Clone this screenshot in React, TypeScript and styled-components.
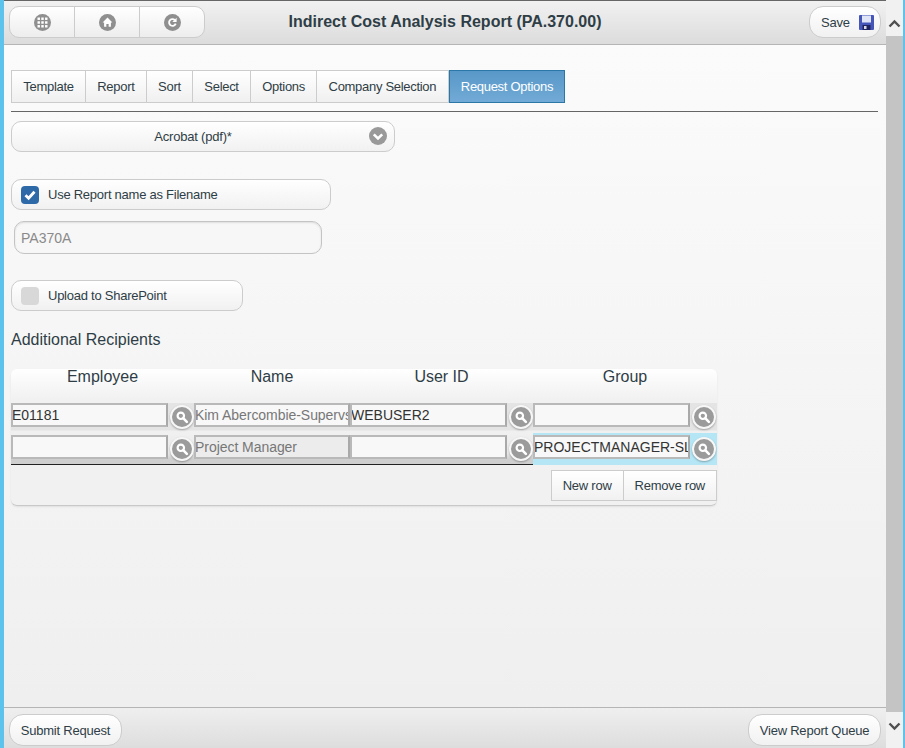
import React from 'react';
import styled, { createGlobalStyle } from 'styled-components';

const GlobalStyle = createGlobalStyle`
  html, body {
    margin: 0;
    padding: 0;
    overflow: hidden;
  }
  body {
    font-family: "Liberation Sans", Arial, sans-serif;
    color: #333;
  }
`;

const Frame = styled.div`
  display: flex;
  width: 905px;
  height: 748px;
  background: #5cc3ec;
  padding: 0 2px 0 4px;
  box-sizing: border-box;
`;

const Page = styled.div`
  width: 882px;
  height: 748px;
  display: flex;
  flex-direction: column;
  border-top: 1px solid #666;
  box-sizing: border-box;
`;

const Header = styled.header`
  height: 44px;
  flex: none;
  box-sizing: border-box;
  border-bottom: 1px solid #b5b5b5;
  background: linear-gradient(#f1f1f1, #dcdcdc);
  display: flex;
  align-items: flex-start;
  justify-content: space-between;
  padding: 5px 5px 0 5px;
  position: relative;
`;

const Title = styled.h1`
  position: absolute;
  left: 0;
  right: 0;
  top: 11px;
  margin: 0;
  text-align: center;
  font-size: 16px;
  line-height: 20px;
  font-weight: bold;
  color: #2f3e46;
`;

const NavGroup = styled.div`
  display: flex;
  width: 196px;
  height: 32px;
  box-sizing: border-box;
  border: 1px solid #ccc;
  border-radius: 10px;
  background: linear-gradient(#fff, #ededed);
  overflow: hidden;
`;

const NavButton = styled.div`
  flex: 1;
  display: flex;
  align-items: center;
  justify-content: center;
  & + & {
    border-left: 1px solid #ccc;
  }
`;

const PillButton = styled.div<{ $wide?: number }>`
  height: 32px;
  box-sizing: border-box;
  width: ${(p) => p.$wide ?? 72}px;
  border: 1px solid #ccc;
  border-radius: 14px;
  background: linear-gradient(#fff, #f1f1f1);
  display: flex;
  align-items: center;
  justify-content: center;
  gap: 9px;
  font-size: 13px;
  letter-spacing: -0.22px;
  color: #2f3e46;
`;

const SaveButton = styled(PillButton)`
  padding-left: 5px;
`;

const Content = styled.main`
  flex: 1;
  background: linear-gradient(#fbfbfb, #efefef);
  padding: 25px 8px 0 7px;
  box-sizing: border-box;
`;

const Tabs = styled.div`
  display: flex;
  height: 33px;
  padding-bottom: 8px;
  border-bottom: 1px solid #666;
  box-sizing: content-box;
`;

const Tab = styled.div<{ $active?: boolean }>`
  height: 33px;
  box-sizing: border-box;
  padding: 0 11.3px;
  display: flex;
  align-items: center;
  font-size: 13px;
  letter-spacing: -0.3px;
  border: 1px solid ${(p) => (p.$active ? '#2a77a8' : '#ccc')};
  border-left-width: ${(p) => (p.$active ? 1 : 0)}px;
  background: ${(p) => (p.$active ? 'linear-gradient(#5898c8, #72aad6)' : 'linear-gradient(#fff, #f0f0f0)')};
  color: ${(p) => (p.$active ? '#fff' : '#2f3e46')};
  &:first-child {
    border-left-width: 1px;
  }
`;

const SelectBox = styled.div`
  position: relative;
  margin-top: 9px;
  width: 384px;
  height: 31px;
  box-sizing: border-box;
  border: 1px solid #ccc;
  border-radius: 10px;
  background: linear-gradient(#fff, #f1f1f1);
  display: flex;
  align-items: center;
  justify-content: center;
  font-size: 13px;
  letter-spacing: -0.2px;
  color: #2f3e46;
  padding-right: 20px;
  & > svg {
    position: absolute;
    right: 7px;
    top: 5px;
  }
`;

const CheckRow = styled.div<{ $width: number; $top: number }>`
  margin-top: ${(p) => p.$top}px;
  width: ${(p) => p.$width}px;
  height: 31px;
  box-sizing: border-box;
  border: 1px solid #ccc;
  border-radius: 10px;
  background: linear-gradient(#fff, #f1f1f1);
  display: flex;
  align-items: center;
  gap: 9px;
  padding-left: 9px;
  font-size: 13px;
  letter-spacing: -0.25px;
  color: #2f3e46;
`;

const CheckMark = styled.span<{ $on?: boolean }>`
  width: 18px;
  height: 18px;
  border-radius: 4px;
  display: flex;
  align-items: center;
  justify-content: center;
  background: ${(p) => (p.$on ? '#2f6aa8' : '#d8d8d8')};
`;

const FileInput = styled.input`
  display: block;
  margin: 11px 0 0 3px;
  width: 308px;
  height: 33px;
  box-sizing: border-box;
  border: 1px solid #c4c4c4;
  border-radius: 10px;
  background: #f7f7f7;
  box-shadow: inset 0 1px 2px rgba(0, 0, 0, 0.1);
  padding: 0 0 0 6px;
  font-family: inherit;
  font-size: 14px;
  color: #8a8a8a;
  outline: none;
`;

const SectionTitle = styled.h2`
  margin: 19px 0 0;
  font-size: 16px;
  line-height: 20px;
  font-weight: normal;
  color: #2f3e46;
`;

const Card = styled.section`
  margin-top: 19px;
  width: 706px;
  height: 137px;
  box-sizing: border-box;
  border-radius: 6px;
  background: linear-gradient(#fff 0, #f1f1f1 30px, #f1f1f1 100%);
  border-bottom: 1px solid #c8c8c8;
  box-shadow: 0 1px 2px rgba(0, 0, 0, 0.08);
`;

const Grid = styled.div`
  display: grid;
  grid-template-columns: 183px 156px 183px 184px;
`;

const HeadCell = styled.div`
  height: 34px;
  text-align: center;
  font-size: 16px;
  line-height: 15px;
  color: #2f3e46;
`;

const Cell = styled.div<{ $band: 'first' | 'second'; $focus?: boolean }>`
  height: ${(p) => (p.$band === 'first' ? 32 : 30)}px;
  box-sizing: border-box;
  display: flex;
  align-items: flex-start;
  background: ${(p) =>
    p.$focus
      ? '#b4e6f6'
      : p.$band === 'first'
        ? 'linear-gradient(#e4e4e4 0, #e4e4e4 27px, #f0f0f0 28px)'
        : 'linear-gradient(#efefef 0, #e9e9e9 18px, #cfcfcf 24px)'};
  box-shadow: ${(p) => (p.$focus ? '0 -2px 0 #b4e6f6' : 'none')};
  border-bottom: ${(p) => (p.$band === 'second' && !p.$focus ? '1px solid #222' : 'none')};
`;

const TextField = styled.input<{ $width: number; $muted?: boolean; $shaded?: boolean }>`
  width: ${(p) => p.$width}px;
  height: 24px;
  box-sizing: border-box;
  border: 2px solid #b9b9b9;
  border-right-color: #a9a9a9;
  border-radius: 0;
  outline: none;
  background: ${(p) => (p.$shaded ? '#ececec' : '#f8f8f8')};
  font-family: inherit;
  font-size: 14px;
  letter-spacing: ${(p) => (p.$muted ? '-0.05px' : '0')};
  padding: 0;
  text-indent: -1px;
  color: ${(p) => (p.$muted ? '#777' : '#333')};
`;

const LookupButton = styled.span`
  width: 24px;
  height: 24px;
  margin: 2px 0 0 2px;
  flex: none;
  border-radius: 50%;
  background: #9b9b9b;
  border: 2px solid #f7f7f7;
  box-shadow: 0 1px 2px rgba(0, 0, 0, 0.3);
  box-sizing: border-box;
  display: flex;
  align-items: center;
  justify-content: center;
`;

const RowActions = styled.div`
  display: flex;
  justify-content: flex-end;
  margin-top: 5px;
`;

const ActionButton = styled.div`
  height: 31px;
  box-sizing: border-box;
  border: 1px solid #ccc;
  border-left-width: 0;
  padding: 0 11px;
  display: flex;
  align-items: center;
  font-size: 13px;
  letter-spacing: -0.25px;
  color: #2f3e46;
  background: linear-gradient(#fff, #f1f1f1);
  &:first-child {
    border-left-width: 1px;
  }
`;

const Footer = styled.footer`
  height: 41px;
  flex: none;
  box-sizing: border-box;
  border-top: 1px solid #b5b5b5;
  background: linear-gradient(#efefef, #dddddd);
  padding: 6px 5px 0;
  display: flex;
  justify-content: space-between;
`;

const Scrollbar = styled.div`
  width: 17px;
  height: 748px;
  flex: none;
  background: #f1f1f1;
  display: flex;
  flex-direction: column;
  align-items: center;
`;

const ScrollArrow = styled.div<{ $bottom?: boolean }>`
  height: 36px;
  flex: none;
  display: flex;
  align-items: center;
  justify-content: center;
  padding: ${(p) => (p.$bottom ? '0 0 8px' : '11px 0 0')};
  box-sizing: border-box;
`;

const ScrollThumb = styled.div`
  flex: 1;
  width: 100%;
  background: #c4c4c4;
`;

const GridIcon = () => (
  <svg width="17" height="17" viewBox="0 0 18 18">
    <circle cx="9" cy="9" r="9" fill="#8f8f8f" />
    {[5, 9, 13].flatMap((y) =>
      [5, 9, 13].map((x) => <rect key={`${x}-${y}`} x={x - 1.3} y={y - 1.3} width="2.6" height="2.6" fill="#fff" />)
    )}
  </svg>
);

const HomeIcon = () => (
  <svg width="17" height="17" viewBox="0 0 18 18">
    <circle cx="9" cy="9" r="9" fill="#8f8f8f" />
    <path d="M9 3.8 L14.2 9 H12.6 V13.5 H10.2 V10.5 H7.8 V13.5 H5.4 V9 H3.8 Z" fill="#fff" />
  </svg>
);

const RefreshIcon = () => (
  <svg width="17" height="17" viewBox="0 0 18 18">
    <circle cx="9" cy="9" r="9" fill="#8f8f8f" />
    <path d="M12.4 10.2 A3.6 3.6 0 1 1 11.4 6.3" fill="none" stroke="#fff" strokeWidth="2" />
    <path d="M13.4 4 V8.6 H8.8 Z" fill="#fff" />
  </svg>
);

const SaveIcon = () => (
  <svg width="15" height="15" viewBox="0 0 15 15">
    <rect width="15" height="15" rx="1" fill="#4656b8" />
    <rect x="3" y="0.5" width="9" height="7" fill="#dfe4f6" />
    <rect x="3.5" y="10" width="8" height="5" fill="#20245e" />
    <rect x="5" y="11" width="2.5" height="3" fill="#d7d7e6" />
  </svg>
);

const ChevronDownCircle = () => (
  <svg width="18" height="18" viewBox="0 0 18 18">
    <circle cx="9" cy="9" r="9" fill="#999" />
    <path d="M4.8 7.3 L9 11.5 L13.2 7.3" fill="none" stroke="#fff" strokeWidth="2.6" />
  </svg>
);

const CheckIcon = () => (
  <svg width="14" height="14" viewBox="0 0 14 14">
    <path d="M2.5 7.2 L5.6 10.3 L11.5 3.8" fill="none" stroke="#fff" strokeWidth="2.8" />
  </svg>
);

const SearchIcon = () => (
  <svg width="14" height="14" viewBox="0 0 13 13">
    <circle cx="5.4" cy="5.4" r="3" fill="none" stroke="#fff" strokeWidth="2" />
    <path d="M7.8 7.8 L11 11" stroke="#fff" strokeWidth="2.4" strokeLinecap="round" />
  </svg>
);

const ScrollChevron = ({ up }: { up?: boolean }) => (
  <svg width="13" height="9" viewBox="0 0 13 9">
    <path d={up ? 'M1.5 7.5 L6.5 2.5 L11.5 7.5' : 'M1.5 1.5 L6.5 6.5 L11.5 1.5'} fill="none" stroke="#505050" strokeWidth="2.4" />
  </svg>
);

const tabs = ['Template', 'Report', 'Sort', 'Select', 'Options', 'Company Selection'];

const LookupCell = ({
  band,
  value = '',
  focus,
}: {
  band: 'first' | 'second';
  value?: string;
  focus?: boolean;
}) => (
  <Cell $band={band} $focus={focus}>
    <TextField $width={157} value={value} readOnly />
    <LookupButton>
      <SearchIcon />
    </LookupButton>
  </Cell>
);

export default function App() {
  return (
    <>
      <GlobalStyle />
      <Frame>
        <Page>
          <Header>
            <Title>Indirect Cost Analysis Report (PA.370.00)</Title>
            <NavGroup>
              <NavButton><GridIcon /></NavButton>
              <NavButton><HomeIcon /></NavButton>
              <NavButton><RefreshIcon /></NavButton>
            </NavGroup>
            <SaveButton>
              Save
              <SaveIcon />
            </SaveButton>
          </Header>
          <Content>
            <Tabs>
              {tabs.map((t) => (
                <Tab key={t}>{t}</Tab>
              ))}
              <Tab $active>Request Options</Tab>
            </Tabs>
            <SelectBox>
              Acrobat (pdf)*
              <ChevronDownCircle />
            </SelectBox>
            <CheckRow $width={320} $top={27}>
              <CheckMark $on><CheckIcon /></CheckMark>
              Use Report name as Filename
            </CheckRow>
            <FileInput value="PA370A" readOnly />
            <CheckRow $width={232} $top={26}>
              <CheckMark />
              Upload to SharePoint
            </CheckRow>
            <SectionTitle>Additional Recipients</SectionTitle>
            <Card>
              <Grid>
                <HeadCell>Employee</HeadCell>
                <HeadCell>Name</HeadCell>
                <HeadCell>User ID</HeadCell>
                <HeadCell>Group</HeadCell>
                <LookupCell band="first" value="E01181" />
                <Cell $band="first">
                  <TextField $width={156} $muted value="Kim Abercombie-Supervsr" readOnly />
                </Cell>
                <LookupCell band="first" value="WEBUSER2" />
                <LookupCell band="first" />
                <LookupCell band="second" />
                <Cell $band="second">
                  <TextField $width={156} $muted $shaded value="Project Manager" readOnly />
                </Cell>
                <LookupCell band="second" />
                <LookupCell band="second" value="PROJECTMANAGER-SLC" focus />
              </Grid>
              <RowActions>
                <ActionButton>New row</ActionButton>
                <ActionButton>Remove row</ActionButton>
              </RowActions>
            </Card>
          </Content>
          <Footer>
            <PillButton $wide={113}>Submit Request</PillButton>
            <PillButton $wide={133}>View Report Queue</PillButton>
          </Footer>
        </Page>
        <Scrollbar>
          <ScrollArrow><ScrollChevron up /></ScrollArrow>
          <ScrollThumb />
          <ScrollArrow $bottom><ScrollChevron /></ScrollArrow>
        </Scrollbar>
      </Frame>
    </>
  );
}
